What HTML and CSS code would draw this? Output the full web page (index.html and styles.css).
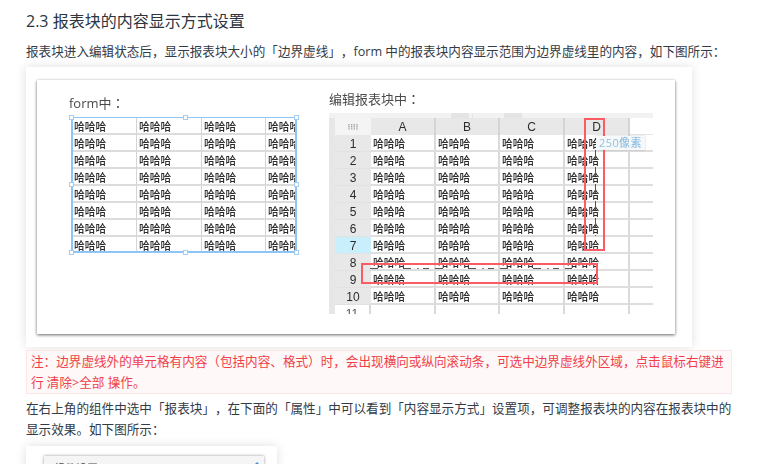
FILE: index.html
```html
<!DOCTYPE html>
<html lang="zh-CN">
<head>
<meta charset="utf-8">
<title>报表块的内容显示方式设置</title>
<link rel="stylesheet" href="styles.css">
</head>
<body>
<main class="article">
  <h3 class="heading">2.3 报表块的内容显示方式设置</h3>
  <p class="para">报表块进入编辑状态后，显示报表块大小的「边界虚线」，form 中的报表块内容显示范围为边界虚线里的内容，如下图所示：</p>
  <figure class="shot">
    <div class="panel">
      <section class="form-col">
        <div class="cap" lang="zh-TW">form中：</div>
        <div class="selection">
          <div class="ftable">
            <span>哈哈哈</span><span>哈哈哈</span><span>哈哈哈</span><span>哈哈哈</span>
            <span>哈哈哈</span><span>哈哈哈</span><span>哈哈哈</span><span>哈哈哈</span>
            <span>哈哈哈</span><span>哈哈哈</span><span>哈哈哈</span><span>哈哈哈</span>
            <span>哈哈哈</span><span>哈哈哈</span><span>哈哈哈</span><span>哈哈哈</span>
            <span>哈哈哈</span><span>哈哈哈</span><span>哈哈哈</span><span>哈哈哈</span>
            <span>哈哈哈</span><span>哈哈哈</span><span>哈哈哈</span><span>哈哈哈</span>
            <span>哈哈哈</span><span>哈哈哈</span><span>哈哈哈</span><span>哈哈哈</span>
            <span>哈哈哈</span><span>哈哈哈</span><span>哈哈哈</span><span>哈哈哈</span>
          </div>
          <i class="handle tl"></i><i class="handle tm"></i><i class="handle tr"></i>
          <i class="handle ml"></i><i class="handle mr"></i>
          <i class="handle bl"></i><i class="handle bm"></i><i class="handle br"></i>
        </div>
      </section>
      <section class="sheet-col">
        <div class="cap" lang="zh-TW">编辑报表块中：</div>
        <div class="sheet">
          <div class="toolbar"><b class="tb1"></b><b class="tb2"></b><b class="tb3"></b></div>
          <div class="sgrid">
            <span class="corner"><svg class="grip" width="10" height="8" viewBox="0 0 10 8"><path d="M1 1v6M3.7 1v6M6.3 1v6M9 1v6" stroke="#9a9a9a" stroke-width="1.2" stroke-dasharray="1.2 .6" fill="none"/></svg></span><span class="ch">A</span><span class="ch">B</span><span class="ch">C</span><span class="ch">D</span><span class="blank top"></span>
            <span class="rn">1</span><span>哈哈哈</span><span>哈哈哈</span><span>哈哈哈</span><span>哈哈哈</span><span class="blank"></span>
            <span class="rn">2</span><span>哈哈哈</span><span>哈哈哈</span><span>哈哈哈</span><span>哈哈哈</span><span class="blank"></span>
            <span class="rn">3</span><span>哈哈哈</span><span>哈哈哈</span><span>哈哈哈</span><span>哈哈哈</span><span class="blank"></span>
            <span class="rn">4</span><span>哈哈哈</span><span>哈哈哈</span><span>哈哈哈</span><span>哈哈哈</span><span class="blank"></span>
            <span class="rn">5</span><span>哈哈哈</span><span>哈哈哈</span><span>哈哈哈</span><span>哈哈哈</span><span class="blank"></span>
            <span class="rn">6</span><span>哈哈哈</span><span>哈哈哈</span><span>哈哈哈</span><span>哈哈哈</span><span class="blank"></span>
            <span class="rn active">7</span><span>哈哈哈</span><span>哈哈哈</span><span>哈哈哈</span><span>哈哈哈</span><span class="blank"></span>
            <span class="rn">8</span><span>哈哈哈</span><span>哈哈哈</span><span>哈哈哈</span><span>哈哈哈</span><span class="blank"></span>
            <span class="rn">9</span><span>哈哈哈</span><span>哈哈哈</span><span>哈哈哈</span><span>哈哈哈</span><span class="blank"></span>
            <span class="rn">10</span><span>哈哈哈</span><span>哈哈哈</span><span>哈哈哈</span><span>哈哈哈</span><span class="blank"></span>
            <span class="rn last">11</span><span class="empty"></span><span class="empty"></span><span class="empty"></span><span class="empty"></span><span class="blank empty"></span>
          </div>
          <i class="dash-v"></i>
          <i class="dash-h"></i>
          <i class="mark mark-col"></i>
          <i class="mark mark-row"></i>
          <span class="tip">250像素</span>
        </div>
      </section>
    </div>
  </figure>
  <div class="note">注：边界虚线外的单元格有内容（包括内容、格式）时，会出现横向或纵向滚动条，可选中边界虚线外区域，点击鼠标右键进行 清除&gt;全部 操作。</div>
  <p class="para after">在右上角的组件中选中「报表块」，在下面的「属性」中可以看到「内容显示方式」设置项，可调整报表块的内容在报表块中的显示效果。如下图所示：</p>
  <figure class="shot2">
    <div class="panel2">
      <span class="panel2-title">组件设置</span>
      <svg class="pencil" width="8" height="8" viewBox="0 0 8 8"><path d="M1 7l1-3 3-3 2 2-3 3z" fill="#4a90d9"/></svg>
    </div>
  </figure>
</main>
</body>
</html>
```
FILE: styles.css
```css
html, body {
  margin: 0;
  height: 464px;
  overflow: hidden;
  background: #fff;
}
body {
  font-family: "Open Sans", "Noto Sans CJK SC", sans-serif;
  color: #333;
  text-spacing-trim: space-all;
}
.article {
  width: 706px;
  padding: 9px 0 0 26px;
}
.heading {
  margin: 0;
  font-size: 16px;
  line-height: 24px;
  font-weight: 400;
  color: #2c3440;
}
.para {
  margin: 8px 0 0;
  font-size: 12.6px;
  line-height: 21px;
  color: #333b47;
}
.para.after {
  margin-top: 4px;
}
.shot {
  margin: 5px 0 0;
  width: 666px;
  height: 280px;
  box-sizing: border-box;
  padding: 13px 17px 13px 11px;
  background: #fff;
  box-shadow: 0 0 10px rgba(0, 0, 0, .13);
}
.panel {
  display: flex;
  height: 254px;
  background: #fff;
  box-shadow: 0 1px 3px rgba(0, 0, 0, .6);
  filter: blur(.45px);
}
.form-col {
  width: 260px;
  margin-left: 32px;
  padding-top: 14px;
}
.sheet-col {
  margin-left: 0;
  padding-top: 10px;
}
.cap {
  font-family: "Open Sans", "Noto Sans CJK TC", sans-serif;
  font-size: 13px;
  line-height: 19px;
  color: #4a4a4a;
}
.selection {
  position: relative;
  width: 226px;
  height: 136px;
  margin: 4px 0 0 2px;
  box-sizing: border-box;
  border: 1px solid #8ec5f7;
  border-width: 1px 2px 2px 2px;
  overflow: visible;
}
.ftable {
  display: grid;
  grid-template-columns: 64px 65px 64px 29px;
  grid-auto-rows: 17px;
  height: 133px;
  overflow: hidden;
  font-size: 10.8px;
  line-height: 17px;
  font-weight: 500;
  color: #2b2b2b;
}
.ftable span {
  box-sizing: border-box;
  height: 17px;
  padding-left: 2px;
  border-right: 1px solid #d4d4d4;
  border-bottom: 2px solid #dcdcdc;
  white-space: nowrap;
  overflow: hidden;
}
.ftable span:nth-child(4n+1) {
  padding-left: 1px;
}
.ftable span:nth-child(4n) {
  border-right: 0;
}
.handle {
  position: absolute;
  width: 3px;
  height: 3px;
  background: #fff;
  border: 1px solid #a5cdf0;
}
.tl { left: -4px; top: -3px; }
.tm { left: 110px; top: -3px; }
.tr { right: -4px; top: -3px; }
.ml { left: -4px; top: 64px; }
.mr { right: -4px; top: 64px; }
.bl { left: -4px; bottom: -4px; }
.bm { left: 110px; bottom: -4px; }
.br { right: -4px; bottom: -4px; }
.sheet {
  position: relative;
  width: 324px;
  height: 201px;
  margin-top: 4px;
  padding-left: 6px;
  box-sizing: border-box;
  overflow: hidden;
  background: linear-gradient(to right, #e7e7e7 6px, #fff 6px);
}
.toolbar {
  display: flex;
  height: 5px;
  margin-left: -6px;
  background: #f2f2f2;
}
.toolbar b {
  height: 5px;
  background: #e4e4e4;
}
.tb1 { width: 18px; margin-left: 122px; }
.tb2 { width: 1px; margin-left: 3px; background: #fff; }
.tb3 { width: 18px; margin-left: 31px; }
.sgrid {
  display: grid;
  grid-template-columns: 36px 65px 64px 65px 65px 23px;
  grid-auto-rows: 17px;
  font-size: 10.8px;
  line-height: 18px;
  font-weight: 500;
  color: #2b2b2b;
}
.sgrid span {
  box-sizing: border-box;
  height: 17px;
  padding-left: 2px;
  border-right: 2px solid #dadada;
  border-bottom: 2px solid #dedede;
  white-space: nowrap;
}
.sgrid .corner {
  display: flex;
  align-items: center;
  justify-content: center;
  padding: 0;
  background: #f4f4f4;
  border: 0;
}
.sgrid .ch {
  padding: 0;
  text-align: center;
  font-family: "Liberation Sans", sans-serif;
  font-size: 12px;
  font-weight: 400;
  background: #e8e8e8;
  border-bottom: 0;
  border-right-color: #d4d4d4;
}
.sgrid .rn {
  padding: 0;
  text-align: center;
  font-family: "Liberation Sans", sans-serif;
  font-size: 12px;
  font-weight: 400;
  background: #e8e8e8;
  border-right: 0;
  border-bottom: 1px solid #e2e2e2;
}
.sgrid .rn.active {
  background: #c9effd;
}
.sgrid .rn.last {
  background: #fff;
  border-right: 2px solid #dadada;
  border-bottom: 0;
  color: #555;
}
.sgrid .blank {
  border-right: 0;
}
.sgrid .blank.top {
  border-bottom: 1px solid #e4e4e4;
}
.sgrid .empty {
  border-bottom: 0;
}
.mark {
  position: absolute;
  box-sizing: border-box;
  border: 2px solid #fb5c64;
}
.mark-col {
  left: 255px;
  top: 5px;
  width: 21px;
  height: 133px;
}
.mark-row {
  left: 32px;
  top: 150px;
  width: 237px;
  height: 21px;
}
.dash-v {
  position: absolute;
  left: 266px;
  top: 37px;
  width: 1px;
  height: 86px;
  background: repeating-linear-gradient(to bottom, #555 0 9px, transparent 9px 17px);
}
.dash-h {
  position: absolute;
  left: 41px;
  top: 155px;
  width: 202px;
  height: 1px;
  background: repeating-linear-gradient(to right, #555 0 8px, transparent 8px 33px, #555 33px 41px, transparent 41px 47px, #888 47px 49px, transparent 49px 53px, #555 53px 59px, transparent 59px 65px);
}
.tip {
  position: absolute;
  left: 267px;
  top: 23px;
  padding: 0 3px;
  font-size: 11px;
  line-height: 14px;
  letter-spacing: .4px;
  font-weight: 500;
  color: #92c0df;
  background: #f6f8fa;
  box-shadow: 0 0 2px rgba(0, 0, 0, .2);
}
.shot2 {
  margin: 6px 0 0;
  width: 251px;
  height: 60px;
  box-sizing: border-box;
  padding: 10px 13px 0 18px;
  box-shadow: 0 0 10px rgba(0, 0, 0, .13);
}
.panel2 {
  position: relative;
  height: 50px;
  padding-top: 4px;
  background: #f5f5f5;
  box-shadow: 0 0 3px rgba(0, 0, 0, .4);
  filter: blur(.45px);
}
.panel2-title {
  display: block;
  padding: 0 0 0 10px;
  font-size: 11px;
  line-height: 18px;
  color: #444;
}
.pencil {
  position: absolute;
  right: 4px;
  top: 5px;
}
.note {
  margin-top: 3px;
  box-sizing: border-box;
  height: 44px;
  padding: 0 4px;
  font-size: 12.6px;
  line-height: 21px;
  color: #ef3f49;
  background: #fff8f8;
  border: 1px solid #fde6e8;
}
```
